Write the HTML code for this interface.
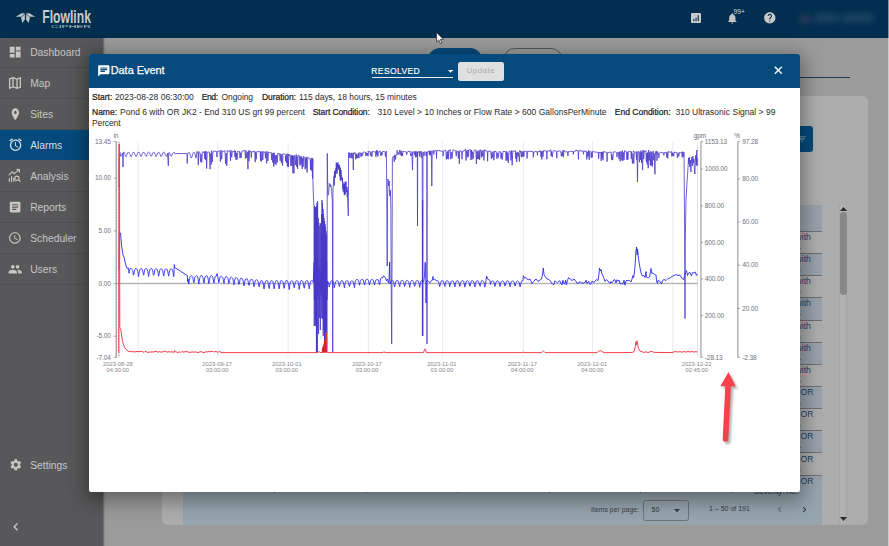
<!DOCTYPE html>
<html><head><meta charset="utf-8"><title>Flowlink Cipher - Data Event</title>
<style>
*{box-sizing:border-box;margin:0;padding:0}
html,body{width:889px;height:546px;overflow:hidden;background:#9b9b9b;font-family:"Liberation Sans",Arial,sans-serif}
.abs{position:absolute}
#hdr{left:0;top:0;width:889px;height:37.6px;background:#022f50}
#side{left:0;top:37.500px;width:103px;height:509px;background:#58585a;box-shadow:1px 0 1.500px rgba(0,0,0,.350)}
.nl{position:absolute;left:30.200px;font-size:10.300px;white-space:nowrap;line-height:12px}
#panel{left:162px;top:96px;width:706px;height:428.500px;background:#adadad;border-radius:6px}
#modal{left:89px;top:54px;width:711px;height:437.5px;background:#fff;border-radius:2px;overflow:hidden;box-shadow:0 5px 19px 4px rgba(0,0,0,.36)}
#mh{left:0;top:0;width:711px;height:34px;background:#054a7c}
.t{position:absolute;white-space:nowrap;font-size:8.500px;color:#262626;left:2.900px;line-height:10.800px}
.t b{font-weight:700;color:#111;letter-spacing:-0.350px}
.ax{font-family:"Liberation Sans",Arial,sans-serif;font-size:6.5px;fill:#70707a;letter-spacing:-0.1px}
.xl{font-family:"Liberation Sans",Arial,sans-serif;font-size:5.8px;fill:#85858c}
.chart{position:absolute;left:0;top:0}
.tx{white-space:nowrap;line-height:1}
</style></head><body>
<div id="panel" class="abs"></div>
<div class="abs" style="left:427.600px;top:48.200px;width:54.600px;height:24px;border-radius:12px;background:#054a7c"></div>
<div class="abs" style="left:503.400px;top:48.400px;width:59.800px;height:24px;border-radius:12px;border:1px solid #55585c"></div>
<div class="abs" style="left:560px;top:77.300px;width:290px;height:1.200px;background:#1c3a56"></div>
<div class="abs" style="left:770px;top:126.400px;width:43px;height:25.400px;border-radius:3px;background:#054a7c"></div>
<svg class="abs" style="left:796.50px;top:134.20px" width="10.00" height="10" viewBox="0 0 24 24" ><path fill="#9fb2c4" d="M10 18h4v-2h-4v2zM3 6v2h18V6H3zm3 7h12v-2H6v2z"/></svg>
<div class="abs" style="left:183.300px;top:204.500px;width:638.700px;height:320px;background:#adadad;overflow:hidden">
<div class="abs" style="left:0;top:0;width:100%;height:27.500px;background:#98a2ac;border-bottom:1px solid #6e7074"></div>
<div class="abs" style="left:0;top:27.50px;width:100%;height:22.150px;background:#adadad;border-bottom:1px solid #6e7074"><span class="abs" style="left:612.3px;top:0px;font-size:8.600px;color:#1c4468">with</span><span class="abs" style="left:611.5px;top:10px;font-size:8px;color:#1c4468">...</span></div>
<div class="abs" style="left:0;top:49.65px;width:100%;height:22.150px;background:#98a2ac;border-bottom:1px solid #6e7074"><span class="abs" style="left:612.3px;top:0px;font-size:8.600px;color:#1c4468">with</span><span class="abs" style="left:611.5px;top:10px;font-size:8px;color:#1c4468">...</span></div>
<div class="abs" style="left:0;top:71.80px;width:100%;height:22.150px;background:#adadad;border-bottom:1px solid #6e7074"><span class="abs" style="left:612.3px;top:0px;font-size:8.600px;color:#1c4468">with</span><span class="abs" style="left:611.5px;top:10px;font-size:8px;color:#1c4468">...</span></div>
<div class="abs" style="left:0;top:93.95px;width:100%;height:22.150px;background:#98a2ac;border-bottom:1px solid #6e7074"><span class="abs" style="left:612.3px;top:0px;font-size:8.600px;color:#1c4468">with</span><span class="abs" style="left:611.5px;top:10px;font-size:8px;color:#1c4468">...</span></div>
<div class="abs" style="left:0;top:116.10px;width:100%;height:22.150px;background:#adadad;border-bottom:1px solid #6e7074"><span class="abs" style="left:612.3px;top:0px;font-size:8.600px;color:#1c4468">with</span><span class="abs" style="left:611.5px;top:10px;font-size:8px;color:#1c4468">...</span></div>
<div class="abs" style="left:0;top:138.25px;width:100%;height:22.150px;background:#98a2ac;border-bottom:1px solid #6e7074"><span class="abs" style="left:612.3px;top:0px;font-size:8.600px;color:#1c4468">with</span><span class="abs" style="left:611.5px;top:10px;font-size:8px;color:#1c4468">...</span></div>
<div class="abs" style="left:0;top:160.40px;width:100%;height:22.150px;background:#adadad;border-bottom:1px solid #6e7074"><span class="abs" style="left:612.3px;top:0px;font-size:8.600px;color:#1c4468">with</span><span class="abs" style="left:611.5px;top:10px;font-size:8px;color:#1c4468">...</span></div>
<div class="abs" style="left:0;top:182.55px;width:100%;height:22.150px;background:#98a2ac;border-bottom:1px solid #6e7074"><span class="abs" style="left:617.2px;top:0px;font-size:8.600px;color:#1c4468">OR</span><span class="abs" style="left:611.5px;top:10px;font-size:8px;color:#1c4468">...</span></div>
<div class="abs" style="left:0;top:204.70px;width:100%;height:22.150px;background:#adadad;border-bottom:1px solid #6e7074"><span class="abs" style="left:617.2px;top:0px;font-size:8.600px;color:#1c4468">OR</span><span class="abs" style="left:611.5px;top:10px;font-size:8px;color:#1c4468">...</span></div>
<div class="abs" style="left:0;top:226.85px;width:100%;height:22.150px;background:#98a2ac;border-bottom:1px solid #6e7074"><span class="abs" style="left:617.2px;top:0px;font-size:8.600px;color:#1c4468">OR</span><span class="abs" style="left:611.5px;top:10px;font-size:8px;color:#1c4468">...</span></div>
<div class="abs" style="left:0;top:249.00px;width:100%;height:22.150px;background:#adadad;border-bottom:1px solid #6e7074"><span class="abs" style="left:617.2px;top:0px;font-size:8.600px;color:#1c4468">OR</span><span class="abs" style="left:611.5px;top:10px;font-size:8px;color:#1c4468">...</span></div>
<div class="abs" style="left:0;top:271.15px;width:100%;height:22.150px;background:#98a2ac;border-bottom:1px solid #6e7074"><span class="abs" style="left:617.2px;top:0px;font-size:8.600px;color:#1c4468">OR</span><span class="abs" style="left:611.5px;top:10px;font-size:8px;color:#1c4468">...</span></div>
<div class="abs" style="left:0;top:280px;width:100%;height:40px;background:#96a4ae"></div>
</div>
<div class="abs" style="left:274.4px;top:490.5px;width:1px;height:2.4px;background:#555a60"></div><div class="abs" style="left:365.7px;top:490.5px;width:1px;height:2.4px;background:#555a60"></div><div class="abs" style="left:457.1px;top:490.5px;width:1px;height:2.4px;background:#555a60"></div><div class="abs" style="left:548.5px;top:490.5px;width:1px;height:2.4px;background:#555a60"></div><div class="abs" style="left:639.9px;top:490.5px;width:1px;height:2.4px;background:#555a60"></div><div class="abs" style="left:731.3px;top:490.5px;width:1px;height:2.4px;background:#555a60"></div>
<span class="abs tx" style="left:754.20px;top:487.17px;font-size:8.3px;font-weight:400;color:#1c4468;letter-spacing:-0.244px;">Severity: no..</span>
<div class="abs" style="left:591px;top:505.600px;font-size:6.800px;color:#3c4046;white-space:nowrap;letter-spacing:0.050px">Items per page:</div>
<div class="abs" style="left:643.300px;top:499.600px;width:45.700px;height:21.400px;border:1px solid #6a747c;border-radius:2.500px"></div>
<div class="abs" style="left:651.500px;top:505.600px;font-size:7px;color:#2c3036">50</div>
<svg class="abs" style="left:674.400px;top:508.600px" width="6" height="3.500" viewBox="0 0 6 3.500"><path d="M0 0 H6 L3 3.300 Z" fill="#3a3e44"/></svg>
<div class="abs" style="left:709px;top:505.400px;font-size:7px;color:#3c4046;white-space:nowrap">1 – 50 of 191</div>
<svg class="abs" style="left:773.50px;top:504.30px" width="11.00" height="11" viewBox="0 0 24 24" ><path fill="#616c76" d="M15.41 7.41L14 6l-6 6 6 6 1.41-1.41L10.83 12z"/></svg>
<svg class="abs" style="left:799.10px;top:504.30px" width="11.00" height="11" viewBox="0 0 24 24" ><path fill="#2c3238" d="M10 6L8.59 7.41 13.17 12l-4.58 4.59L10 18l6-6z"/></svg>
<div class="abs" style="left:839.400px;top:204.500px;width:7.400px;height:318px;background:#b2b2b2;border-left:1px solid #a4a4a4;border-right:1px solid #a4a4a4"></div>
<div class="abs" style="left:839.600px;top:212px;width:7px;height:82.600px;background:#888888;border-radius:3px"></div>
<svg class="abs" style="left:839.600px;top:206.600px" width="7" height="4" viewBox="0 0 7 4"><path d="M0 4 H7 L3.500 0 Z" fill="#2a2a2a"/></svg>
<svg class="abs" style="left:839.600px;top:517px" width="7" height="4" viewBox="0 0 7 4"><path d="M0 0 H7 L3.500 4 Z" fill="#2a2a2a"/></svg>
<div id="hdr" class="abs"></div>
<div id="side" class="abs"></div>
<div class="abs" style="left:0;top:0;width:103px;height:546px">
<div class="abs" style="left:0;top:66.7px;width:103px;height:1px;background:#505052"></div>
<svg class="abs" style="left:8.00px;top:44.80px" width="14.40" height="14.4" viewBox="0 0 24 24" ><path fill="#c6c6c6" d="M3 13h8V3H3v10zm0 8h8v-6H3v6zm10 0h8V11h-8v10zm0-18v6h8V3h-8z"/></svg>
<div class="nl" style="top:47.20px;color:#c6c6c6">Dashboard</div>
<div class="abs" style="left:0;top:97.7px;width:103px;height:1px;background:#505052"></div>
<svg class="abs" style="left:7.20px;top:75.00px" width="16.00" height="16" viewBox="0 0 24 24" ><path fill="#c6c6c6" d="M20.5 3l-.16.03L15 5.1 9 3 3.36 4.9c-.21.07-.36.25-.36.48V20.5c0 .28.22.5.5.5l.16-.03L9 18.9l6 2.1 5.64-1.9c.21-.07.36-.25.36-.48V3.5c0-.28-.22-.5-.5-.5zM10 5.47l4 1.4v11.66l-4-1.4V5.47zm-5 .99l3-1.01v11.7l-3 1.16V6.46zm14 11.08l-3 1.01V6.86l3-1.16v11.84z"/></svg>
<div class="nl" style="top:78.20px;color:#c6c6c6">Map</div>
<div class="abs" style="left:0;top:128.7px;width:103px;height:1px;background:#505052"></div>
<svg class="abs" style="left:8.86px;top:106.80px" width="12.67" height="14.4" viewBox="0 0 24 24" preserveAspectRatio="none" ><path fill="#c6c6c6" d="M12 2C8.13 2 5 5.13 5 9c0 5.25 7 13 7 13s7-7.75 7-13c0-3.87-3.13-7-7-7zm0 9.5c-1.38 0-2.5-1.12-2.5-2.5s1.12-2.5 2.5-2.5 2.5 1.12 2.5 2.5-1.12 2.5-2.5 2.5z"/></svg>
<div class="nl" style="top:109.20px;color:#c6c6c6">Sites</div>
<div class="abs" style="left:0;top:129.5px;width:103px;height:30.4px;background:#054a7c"></div>
<svg class="abs" style="left:7.60px;top:137.40px" width="15.20" height="15.2" viewBox="0 0 24 24" ><path fill="#d4dde6" d="M22 5.72l-4.6-3.86-1.29 1.53 4.6 3.86L22 5.72zM7.88 3.39L6.6 1.86 2 5.71l1.29 1.53 4.59-3.85zM12.5 8H11v6l4.75 2.85.75-1.23-4-2.37V8zM12 4c-4.97 0-9 4.03-9 9s4.02 9 9 9c4.97 0 9-4.03 9-9s-4.03-9-9-9zm0 16c-3.87 0-7-3.13-7-7s3.13-7 7-7 7 3.13 7 7-3.13 7-7 7z"/></svg>
<div class="nl" style="top:140.20px;color:#d4dde6">Alarms</div>
<div class="abs" style="left:0;top:190.7px;width:103px;height:1px;background:#505052"></div>
<svg class="abs" style="left:8.2px;top:169.40px" width="13.4" height="13.4" viewBox="0 0 24 24" fill="none" stroke="#c6c6c6" stroke-width="2"><path d="M1.5 11.5 L7.5 5 L11 8.5 L20 1.2"/><path d="M15 1 H20.5 V6.5"/><path d="M2.500 23 V16.500 M6.500 23 V13 M10.500 23 V15.500" stroke-width="2.200"/><circle cx="16" cy="16.500" r="3.800"/><path d="M19 19.500 L22.500 23"/></svg>
<div class="nl" style="top:171.20px;color:#c6c6c6">Analysis</div>
<div class="abs" style="left:0;top:221.7px;width:103px;height:1px;background:#505052"></div>
<svg class="abs" style="left:8.10px;top:199.90px" width="14.20" height="14.2" viewBox="0 0 24 24" ><path fill="#c6c6c6" d="M19 3H5c-1.1 0-2 .9-2 2v14c0 1.1.9 2 2 2h14c1.1 0 2-.9 2-2V5c0-1.1-.9-2-2-2zm-5 14H7v-2h7v2zm3-4H7v-2h10v2zm0-4H7V7h10v2z"/></svg>
<div class="nl" style="top:202.20px;color:#c6c6c6">Reports</div>
<div class="abs" style="left:0;top:252.7px;width:103px;height:1px;background:#505052"></div>
<svg class="abs" style="left:8.30px;top:231.10px" width="13.80" height="13.8" viewBox="0 0 24 24" ><path fill="#c6c6c6" d="M11.99 2C6.47 2 2 6.48 2 12s4.47 10 9.99 10C17.52 22 22 17.52 22 12S17.52 2 11.99 2zM12 20c-4.42 0-8-3.58-8-8s3.58-8 8-8 8 3.58 8 8-3.58 8-8 8zm.5-13H11v6l5.25 3.15.75-1.23-4.5-2.67z"/></svg>
<div class="nl" style="top:233.20px;color:#c6c6c6">Scheduler</div>
<div class="abs" style="left:0;top:283.7px;width:103px;height:1px;background:#505052"></div>
<svg class="abs" style="left:8.00px;top:261.80px" width="14.40" height="14.4" viewBox="0 0 24 24" ><path fill="#c6c6c6" d="M16 11c1.66 0 2.99-1.34 2.99-3S17.66 5 16 5c-1.66 0-3 1.34-3 3s1.34 3 3 3zm-8 0c1.66 0 2.99-1.34 2.99-3S9.66 5 8 5C6.34 5 5 6.34 5 8s1.34 3 3 3zm0 2c-2.33 0-7 1.17-7 3.5V19h14v-2.5c0-2.33-4.67-3.5-7-3.5zm8 0c-.29 0-.62.02-.97.05 1.16.84 1.97 1.97 1.97 3.45V19h6v-2.5c0-2.33-4.67-3.5-7-3.5z"/></svg>
<div class="nl" style="top:264.20px;color:#c6c6c6">Users</div>
<svg class="abs" style="left:8.50px;top:458.20px" width="13.60" height="13.6" viewBox="0 0 24 24" ><path fill="#c6c6c6" d="M19.14 12.94c.04-.3.06-.61.06-.94 0-.32-.02-.64-.07-.94l2.03-1.58c.18-.14.23-.41.12-.61l-1.92-3.32c-.12-.22-.37-.29-.59-.22l-2.39.96c-.5-.38-1.03-.7-1.62-.94l-.36-2.54c-.04-.24-.24-.41-.48-.41h-3.84c-.24 0-.43.17-.47.41l-.36 2.54c-.59.24-1.13.57-1.62.94l-2.39-.96c-.22-.08-.47 0-.59.22L2.74 8.87c-.12.21-.08.47.12.61l2.03 1.58c-.05.3-.09.63-.09.94s.02.64.07.94l-2.03 1.58c-.18.14-.23.41-.12.61l1.92 3.32c.12.22.37.29.59.22l2.39-.96c.5.38 1.03.7 1.62.94l.36 2.54c.05.24.24.41.48.41h3.84c.24 0 .44-.17.47-.41l.36-2.54c.59-.24 1.13-.56 1.62-.94l2.39.96c.22.08.47 0 .59-.22l1.92-3.32c.12-.22.07-.47-.12-.61l-2.01-1.58zM12 15.6c-1.98 0-3.6-1.62-3.6-3.6s1.62-3.6 3.6-3.6 3.6 1.62 3.6 3.6-1.62 3.6-3.6 3.6z"/></svg>
<div class="nl" style="top:459.8px;color:#c6c6c6">Settings</div>
<svg class="abs" style="left:7.80px;top:518.60px" width="15.60" height="15.6" viewBox="0 0 24 24" ><path fill="#d0d0d0" d="M15.41 7.41L14 6l-6 6 6 6 1.41-1.41L10.83 12z"/></svg>
</div>
<svg class="abs" style="left:15px;top:11.500px" width="21" height="12" viewBox="0 0 21 12"><g fill="#c2c4c6"><path d="M0.800 4.700 L6.600 1.300 L10 1.300 L6.300 4.700 Z"/><path d="M20.200 4.700 L14.400 1.300 L11 1.300 L14.700 4.700 Z"/><path d="M6.100 5.500 L9.900 2 L9.900 7.500 L7.300 11 Z"/><path d="M14.900 5.500 L11.100 2 L11.100 7.500 L13.700 11 Z"/></g></svg>
<svg class="abs" style="left:40px;top:5px" width="60" height="28" viewBox="0 0 60 28"><text x="2.300" y="17.500" font-family="Liberation Sans, Arial, sans-serif" font-weight="700" font-size="17.500" fill="#c9cacb" textLength="48.600" lengthAdjust="spacingAndGlyphs">Flowlink</text><text x="11" y="23.100" font-family="Liberation Sans, Arial, sans-serif" font-size="3.900" fill="#c2c4c6" textLength="40" lengthAdjust="spacingAndGlyphs">CIPHER</text></svg>
<svg class="abs" style="left:691px;top:12.800px" width="10" height="10" viewBox="0 0 10 10"><rect width="10" height="10" rx="1" fill="#c8c9ca"/><rect x="2.200" y="6" width="1.300" height="2.200" fill="#2a4a66"/><rect x="4.400" y="4.600" width="1.300" height="3.600" fill="#2a4a66"/><rect x="6.600" y="2.200" width="1.400" height="6" fill="#2a4a66"/></svg>
<svg class="abs" style="left:726.40px;top:12.20px" width="12.60" height="12.6" viewBox="0 0 24 24" ><path fill="#c4c5c6" d="M12 22c1.1 0 2-.9 2-2h-4c0 1.1.89 2 2 2zm6-6v-5c0-3.07-1.64-5.64-4.5-6.32V4c0-.83-.67-1.5-1.5-1.5s-1.500.67-1.5 1.5v.68C7.63 5.36 6 7.92 6 11v5l-2 2v1h16v-1l-2-2z"/></svg>
<div class="abs" style="left:733.600px;top:7.900px;font-size:6.600px;color:#d4d5d6">99+</div>
<svg class="abs" style="left:762.80px;top:10.90px" width="13.60" height="13.6" viewBox="0 0 24 24" ><path fill="#c8c9ca" d="M12 2C6.48 2 2 6.48 2 12s4.48 10 10 10 10-4.48 10-10S17.52 2 12 2zm1 17h-2v-2h2v2zm2.070-7.75l-.9.92C13.45 12.9 13 13.5 13 15h-2v-.5c0-1.1.45-2.1 1.170-2.830l1.24-1.260c.37-.36.59-.86.59-1.410 0-1.1-.9-2-2-2s-2 .9-2 2H8c0-2.210 1.790-4 4-4s4 1.790 4 4c0 .88-.36 1.680-.93 2.250z"/></svg>
<div class="abs" style="left:800px;top:13.500px;width:10px;height:10px;border-radius:5px;background:#6a4a62;filter:blur(3px);opacity:.45"></div>
<div class="abs" style="left:814px;top:14px;width:24px;height:8px;border-radius:3px;background:#3a5a74;filter:blur(3px);opacity:.5"></div>
<div class="abs" style="left:840px;top:14px;width:34px;height:8px;border-radius:3px;background:#3a5a74;filter:blur(3px);opacity:.5"></div>
<svg class="abs" style="left:435.7px;top:31.700px" width="9" height="13" viewBox="0 0 9 13"><path d="M0.500 0.500 L0.500 10 L2.800 7.900 L4.400 11.600 L5.900 11 L4.300 7.400 L7.400 7.300 Z" fill="#fff" stroke="#222" stroke-width="0.700"/></svg>
<div id="modal" class="abs">
<div id="mh" class="abs"></div>
<svg class="abs" style="left:7.80px;top:9.90px" width="13.60" height="13.6" viewBox="0 0 24 24" ><path fill="#ffffff" d="M20 2H4c-1.1 0-1.990.9-1.990 2L2 22l4-4h14c1.1 0 2-.9 2-2V4c0-1.1-.9-2-2-2zM6 9h12v2H6V9zm8 5H6v-2h8v2zm4-6H6V6h12v2z"/></svg>
<div class="abs" style="left:21.700px;top:10.000px;font-size:10.900px;color:#fff;white-space:nowrap;-webkit-text-stroke:0.250px #fff" id="ttl">Data Event</div>
<div class="abs" style="left:282.300px;top:12.300px;font-size:8.500px;color:#fff;white-space:nowrap;letter-spacing:0.400px;-webkit-text-stroke:0.150px #fff" id="res">RESOLVED</div>
<div class="abs" style="left:282.500px;top:23px;width:81.200px;height:0.900px;background:#e8eef4"></div>
<svg class="abs" style="left:358.600px;top:16.200px" width="5.200" height="2.800" viewBox="0 0 5.200 2.800"><path d="M0 0 H5.200 L2.600 2.700 Z" fill="#fff"/></svg>
<div class="abs" style="left:369.100px;top:7.900px;width:45.600px;height:19.100px;border-radius:2.500px;background:#e0e0e0"></div>
<div class="abs" style="left:377.600px;top:11.900px;font-size:8px;color:#a9a9a9;white-space:nowrap;letter-spacing:0.450px" id="upd">Update</div>
<svg class="abs" style="left:682.70px;top:10.10px" width="12.60" height="12.6" viewBox="0 0 24 24" stroke="#fff" stroke-width="0.9"><path fill="#ffffff" d="M19 6.410L17.590 5 12 10.590 6.410 5 5 6.410 10.590 12 5 17.590 6.410 19 12 13.410 17.590 19 19 17.590 13.410 12z"/></svg>
<div class="abs" style="left:-89px;top:-54px;width:889px;height:546px"><span class="abs tx" style="left:92.00px;top:92.70px;font-size:8.5px;font-weight:400;color:#1a1a1a;letter-spacing:-0.002px;-webkit-text-stroke:0.22px #1a1a1a">Start:</span>
<span class="abs tx" style="left:114.90px;top:92.70px;font-size:8.5px;font-weight:400;color:#2a2a2a;letter-spacing:-0.007px;">2023-08-28 06:30:00</span>
<span class="abs tx" style="left:201.80px;top:92.70px;font-size:8.5px;font-weight:400;color:#1a1a1a;letter-spacing:-0.425px;-webkit-text-stroke:0.22px #1a1a1a">End:</span>
<span class="abs tx" style="left:221.60px;top:92.70px;font-size:8.5px;font-weight:400;color:#2a2a2a;letter-spacing:-0.106px;">Ongoing</span>
<span class="abs tx" style="left:262.00px;top:92.70px;font-size:8.5px;font-weight:400;color:#1a1a1a;letter-spacing:-0.067px;-webkit-text-stroke:0.22px #1a1a1a">Duration:</span>
<span class="abs tx" style="left:299.10px;top:92.70px;font-size:8.5px;font-weight:400;color:#2a2a2a;letter-spacing:-0.013px;">115 days, 18 hours, 15 minutes</span>
<span class="abs tx" style="left:92.00px;top:108.30px;font-size:8.5px;font-weight:400;color:#1a1a1a;letter-spacing:-0.009px;-webkit-text-stroke:0.22px #1a1a1a">Name:</span>
<span class="abs tx" style="left:120.00px;top:108.30px;font-size:8.5px;font-weight:400;color:#2a2a2a;letter-spacing:0.005px;">Pond 6 with OR JK2 - End 310 US grt 99 percent</span>
<span class="abs tx" style="left:312.70px;top:108.30px;font-size:8.5px;font-weight:400;color:#1a1a1a;letter-spacing:-0.100px;-webkit-text-stroke:0.22px #1a1a1a">Start Condition:</span>
<span class="abs tx" style="left:377.60px;top:108.30px;font-size:8.5px;font-weight:400;color:#2a2a2a;letter-spacing:0.022px;">310 Level &gt; 10 Inches or Flow Rate &gt; 600 GallonsPerMinute</span>
<span class="abs tx" style="left:614.80px;top:108.30px;font-size:8.5px;font-weight:400;color:#1a1a1a;letter-spacing:0.002px;-webkit-text-stroke:0.22px #1a1a1a">End Condition:</span>
<span class="abs tx" style="left:675.40px;top:108.30px;font-size:8.5px;font-weight:400;color:#2a2a2a;letter-spacing:0.024px;">310 Ultrasonic Signal &gt; 99</span>
<span class="abs tx" style="left:92.00px;top:119.20px;font-size:8.5px;font-weight:400;color:#2a2a2a;letter-spacing:-0.128px;">Percent</span></div>
</div>
<svg class="chart" width="889" height="546" viewBox="0 0 889 546">
<line x1="138.2" y1="141.6" x2="138.2" y2="357" stroke="#e8e9f5" stroke-width="0.9"/>
<line x1="217.9" y1="141.6" x2="217.9" y2="357" stroke="#e8e9f5" stroke-width="0.9"/>
<line x1="288.0" y1="141.6" x2="288.0" y2="357" stroke="#e8e9f5" stroke-width="0.9"/>
<line x1="368.4" y1="141.6" x2="368.4" y2="357" stroke="#e8e9f5" stroke-width="0.9"/>
<line x1="442.5" y1="141.6" x2="442.5" y2="357" stroke="#e8e9f5" stroke-width="0.9"/>
<line x1="523.4" y1="141.6" x2="523.4" y2="357" stroke="#e8e9f5" stroke-width="0.9"/>
<line x1="592.5" y1="141.6" x2="592.5" y2="357" stroke="#e8e9f5" stroke-width="0.9"/>
<line x1="672.8" y1="141.6" x2="672.8" y2="357" stroke="#e8e9f5" stroke-width="0.9"/>
<line x1="697.6" y1="141.6" x2="697.6" y2="357" stroke="#dcdcdc" stroke-width="0.9"/>
<line x1="117" y1="283.6" x2="698" y2="283.6" stroke="#b6b6b6" stroke-width="1.5"/>
<line x1="116.3" y1="141.6" x2="116.3" y2="357.6" stroke="#a8a8ac" stroke-width="1.5"/>
<line x1="113.8" y1="141.6" x2="116.3" y2="141.6" stroke="#8a8a8a" stroke-width="0.8"/>
<text x="110.8" y="143.85" text-anchor="end" class="ax">13.45</text>
<line x1="113.8" y1="178.1" x2="116.3" y2="178.1" stroke="#8a8a8a" stroke-width="0.8"/>
<text x="110.8" y="180.35" text-anchor="end" class="ax">10.00</text>
<line x1="113.8" y1="230.9" x2="116.3" y2="230.9" stroke="#8a8a8a" stroke-width="0.8"/>
<text x="110.8" y="233.15" text-anchor="end" class="ax">5.00</text>
<line x1="113.8" y1="283.6" x2="116.3" y2="283.6" stroke="#8a8a8a" stroke-width="0.8"/>
<text x="110.8" y="285.85" text-anchor="end" class="ax">0.00</text>
<line x1="113.8" y1="336.2" x2="116.3" y2="336.2" stroke="#8a8a8a" stroke-width="0.8"/>
<text x="110.8" y="338.45" text-anchor="end" class="ax">-5.00</text>
<line x1="113.8" y1="357.3" x2="116.3" y2="357.3" stroke="#8a8a8a" stroke-width="0.8"/>
<text x="110.8" y="359.55" text-anchor="end" class="ax">-7.04</text>
<text x="115.9" y="137.8" text-anchor="middle" class="ax">in</text>
<line x1="700.9" y1="141.6" x2="700.9" y2="357.6" stroke="#a8a8ac" stroke-width="1.3"/>
<line x1="700.9" y1="141.6" x2="703" y2="141.6" stroke="#8a8a8a" stroke-width="0.8"/>
<text x="704.8" y="143.85" class="ax">1153.13</text>
<line x1="700.9" y1="169.1" x2="703" y2="169.1" stroke="#8a8a8a" stroke-width="0.8"/>
<text x="704.8" y="171.35" class="ax">1000.00</text>
<line x1="700.9" y1="205.8" x2="703" y2="205.8" stroke="#8a8a8a" stroke-width="0.8"/>
<text x="704.8" y="208.05" class="ax">800.00</text>
<line x1="700.9" y1="242.3" x2="703" y2="242.3" stroke="#8a8a8a" stroke-width="0.8"/>
<text x="704.8" y="244.55" class="ax">600.00</text>
<line x1="700.9" y1="278.9" x2="703" y2="278.9" stroke="#8a8a8a" stroke-width="0.8"/>
<text x="704.8" y="281.15" class="ax">400.00</text>
<line x1="700.9" y1="315.5" x2="703" y2="315.5" stroke="#8a8a8a" stroke-width="0.8"/>
<text x="704.8" y="317.75" class="ax">200.00</text>
<line x1="700.9" y1="357.3" x2="703" y2="357.3" stroke="#8a8a8a" stroke-width="0.8"/>
<text x="704.8" y="359.55" class="ax">-28.13</text>
<text x="700" y="137.6" text-anchor="middle" class="ax">gpm</text>
<line x1="737.8" y1="141.6" x2="737.8" y2="357.6" stroke="#a8a8ac" stroke-width="1.3"/>
<line x1="737.8" y1="141.6" x2="740" y2="141.6" stroke="#8a8a8a" stroke-width="0.8"/>
<text x="742.2" y="143.85" class="ax">97.28</text>
<line x1="737.8" y1="179" x2="740" y2="179" stroke="#8a8a8a" stroke-width="0.8"/>
<text x="742.2" y="181.25" class="ax">80.00</text>
<line x1="737.8" y1="222" x2="740" y2="222" stroke="#8a8a8a" stroke-width="0.8"/>
<text x="742.2" y="224.25" class="ax">60.00</text>
<line x1="737.8" y1="265.2" x2="740" y2="265.2" stroke="#8a8a8a" stroke-width="0.8"/>
<text x="742.2" y="267.45" class="ax">40.00</text>
<line x1="737.8" y1="308.4" x2="740" y2="308.4" stroke="#8a8a8a" stroke-width="0.8"/>
<text x="742.2" y="310.65" class="ax">20.00</text>
<line x1="737.8" y1="357.3" x2="740" y2="357.3" stroke="#8a8a8a" stroke-width="0.8"/>
<text x="742.2" y="359.55" class="ax">-2.38</text>
<text x="737.2" y="137.6" text-anchor="middle" class="ax">%</text>
<text x="117.8" y="366.2" text-anchor="middle" class="xl">2023-08-28</text>
<text x="117.8" y="371.7" text-anchor="middle" class="xl">04:30:00</text>
<text x="217.2" y="366.2" text-anchor="middle" class="xl">2023-09-17</text>
<text x="217.2" y="371.7" text-anchor="middle" class="xl">03:00:00</text>
<text x="286.8" y="366.2" text-anchor="middle" class="xl">2023-10-01</text>
<text x="286.8" y="371.7" text-anchor="middle" class="xl">03:00:00</text>
<text x="367" y="366.2" text-anchor="middle" class="xl">2023-10-17</text>
<text x="367" y="371.7" text-anchor="middle" class="xl">03:00:00</text>
<text x="441.9" y="366.2" text-anchor="middle" class="xl">2023-11-01</text>
<text x="441.9" y="371.7" text-anchor="middle" class="xl">03:00:00</text>
<text x="522.3" y="366.2" text-anchor="middle" class="xl">2023-11-17</text>
<text x="522.3" y="371.7" text-anchor="middle" class="xl">04:00:00</text>
<text x="592.2" y="366.2" text-anchor="middle" class="xl">2023-12-01</text>
<text x="592.2" y="371.7" text-anchor="middle" class="xl">04:00:00</text>
<text x="696.7" y="366.2" text-anchor="middle" class="xl">2023-12-22</text>
<text x="696.7" y="371.7" text-anchor="middle" class="xl">02:45:00</text>
<path d="M119 270 L119.3 232 L120.5 233 L121.5 245 L123 255 L124 257 L125.5 264 L127 268.5 L128.5 268 L129 273.21 L129.4 271.23 L129.8 269.78 L130.2 269.03 L130.6 268.45 L131.0 268.48 L131.4 268.48 L131.8 268.95 L132.2 269.62 L132.6 270.48 L133.0 272.46 L133.4 275.17 L133.8 274.59 L134.2 272.18 L134.6 270.41 L135.0 269.14 L135.4 268.48 L135.8 268.54 L136.2 268.52 L136.6 268.69 L137.0 269.26 L137.4 270.03 L137.8 271.51 L138.2 273.87 L138.6 276.54 L139.0 273.33 L139.4 271.53 L139.8 269.98 L140.2 269.2 L140.6 268.84 L141.0 268.58 L141.4 268.6 L141.8 268.64 L142.2 269.48 L142.6 270.39 L143.0 272.29 L143.4 274.98 L143.8 274.96 L144.2 272.44 L144.6 270.4 L145.0 269.2 L145.4 268.7 L145.8 268.5 L146.2 268.62 L146.6 268.52 L147.0 269.28 L147.4 269.98 L147.8 271.25 L148.2 273.53 L148.6 276.48 L149.0 273.86 L149.4 271.44 L149.8 270.24 L150.2 269.43 L150.6 268.8 L151.0 268.74 L151.4 268.55 L151.8 268.71 L152.2 269.37 L152.6 270.45 L153.0 272.56 L153.4 274.77 L153.8 275.3 L154.2 273.09 L154.6 270.91 L155.0 269.47 L155.4 269.04 L155.8 268.58 L156.2 268.82 L156.6 269.09 L157.0 269.33 L157.4 270.02 L157.8 271.23 L158.2 273.45 L158.6 276.19 L159.0 274.44 L159.4 271.96 L159.8 270.44 L160.2 269.27 L160.6 268.81 L161.0 269.01 L161.4 269.11 L161.8 269.17 L162.2 269.63 L162.6 270.69 L163.0 272.41 L163.4 274.63 L163.8 275.96 L164.2 273.14 L164.6 270.93 L165.0 269.62 L165.4 269.06 L165.8 268.82 L166.2 269.01 L166.6 269.18 L167.0 269.19 L167.4 270.15 L167.8 271.53 L168.2 273.6 L168.6 276.09 L169.0 274.55 L169.4 272.12 L169.8 270.39 L170.2 269.39 L170.6 269.14 L171.0 269.17 L171.4 269.14 L171.8 269.07 L172.2 269.6 L172.6 270.66 L173.0 271.99 L173.4 274.68 L173.8 276.57 L174.3 264.5 L174.8 267.5 L187.3 275.6 L187.6 282 L188 278.93 L188.4 281.36 L188.8 284.02 L189.2 280.79 L189.6 278.73 L190.0 276.91 L190.4 276.26 L190.8 276.0 L191.2 275.65 L191.6 275.67 L192.0 276.13 L192.4 276.63 L192.8 277.61 L193.2 279.61 L193.6 282.39 L194.0 282.77 L194.4 279.95 L194.8 277.6 L195.2 276.68 L195.6 276.14 L196.0 275.79 L196.4 275.63 L196.8 275.79 L197.2 275.93 L197.6 276.75 L198.0 278.82 L198.4 281.03 L198.8 284.04 L199.2 281.45 L199.6 278.75 L200.0 277.31 L200.4 276.34 L200.8 275.64 L201.2 275.58 L201.6 275.61 L202.0 275.74 L202.4 276.47 L202.8 277.5 L203.2 279.51 L203.6 282.07 L204.0 283.09 L204.4 279.96 L204.8 277.92 L205.2 276.65 L205.6 276.14 L206.0 275.68 L206.4 275.91 L206.8 275.75 L207.2 276.07 L207.6 276.89 L208.0 278.15 L208.4 280.65 L208.8 283.54 L209.2 281.27 L209.6 279.15 L210.0 277.09 L210.4 276.23 L210.8 275.91 L211.2 275.73 L211.6 275.62 L212.0 275.85 L212.4 276.38 L212.8 277.61 L213.2 279.13 L213.6 281.99 L214.0 283.08 L214.4 280.18 L214.8 278.25 L215.2 276.72 L215.6 276.02 L216.0 275.86 L216.4 275.91 L217 273.6 L217.6 276 L218 277.98 L218.4 280.06 L218.8 282.65 L219.2 281.32 L219.6 279.17 L220.0 277.48 L220.4 276.61 L220.8 276.2 L221.2 276.37 L221.6 276.29 L222.0 276.52 L222.4 277.0 L222.8 277.62 L223.2 279.39 L223.6 281.88 L224.0 283.52 L224.4 280.58 L224.8 278.63 L225.2 277.53 L225.6 276.69 L226.0 276.56 L226.4 276.49 L226.8 276.85 L227.2 277.16 L227.6 277.88 L228.0 278.75 L228.4 280.96 L228.8 283.52 L229.2 282.47 L229.6 280.53 L230.0 278.94 L230.4 277.6 L230.8 277.53 L231.2 277.17 L231.6 277.25 L232.0 277.63 L232.4 277.96 L232.8 278.53 L233.2 280.21 L233.6 282.48 L234.0 284.64 L234.4 281.92 L234.8 279.97 L235.2 278.84 L235.6 277.79 L236.0 277.8 L236.4 277.74 L236.8 277.59 L237.2 277.97 L237.6 278.73 L238.0 279.85 L238.4 281.49 L238.8 284.47 L239.2 284.14 L239.6 281.86 L240.0 279.72 L240.4 278.77 L240.8 278.18 L241.2 278.44 L241.6 278.21 L242.0 278.25 L242.4 278.77 L242.8 279.86 L243.2 281.29 L243.6 283.18 L244.0 285.91 L244.4 283.59 L244.8 281.34 L245.2 280.01 L245.6 278.94 L246.0 278.64 L246.4 278.94 L246.8 278.86 L247.2 278.88 L247.6 279.87 L248.0 280.84 L248.4 282.71 L248.8 284.81 L249.2 285.52 L249.6 282.69 L250.0 281.31 L250.4 280.01 L250.8 279.43 L251.2 279.4 L251.6 279.61 L252.0 279.38 L252.4 279.64 L252.8 280.63 L253.2 281.9 L253.6 283.93 L254.0 286.69 L254.4 284.48 L254.8 282.41 L255.2 281.0 L255.6 280.18 L256.0 280.08 L256.4 279.81 L256.8 279.96 L257.2 279.98 L257.6 280.58 L258.0 281.47 L258.4 283.3 L258.8 285.58 L259.2 286.81 L259.6 284.22 L260 282.91 L260.4 281.61 L260.8 281.1 L261.2 280.43 L261.6 280.76 L262.0 280.61 L262.4 280.95 L262.8 281.95 L263.2 283.3 L263.6 285.74 L264.0 288.98 L264.4 287.15 L264.8 284.13 L265.2 282.48 L265.6 281.31 L266.0 280.79 L266.4 280.56 L266.8 280.53 L267.2 280.51 L267.6 281.06 L268.0 282.18 L268.4 284.44 L268.8 286.94 L269.2 288.55 L269.6 285.39 L270.0 283.42 L270.4 281.91 L270.8 281.01 L271.2 280.53 L271.6 280.47 L272.0 280.53 L272.4 280.88 L272.8 281.5 L273.2 283.13 L273.6 285.34 L274.0 288.78 L274.4 287.46 L274.8 284.46 L275.2 282.34 L275.6 281.52 L276.0 280.65 L276.4 280.53 L276.8 280.35 L277.2 280.65 L277.6 281.16 L278.0 282.25 L278.4 283.94 L278.8 286.76 L279.2 288.82 L279.6 285.76 L280.0 283.25 L280.4 281.8 L280.8 280.75 L281.2 280.41 L281.6 280.5 L282.0 280.49 L282.4 280.9 L282.8 281.58 L283.2 283.1 L283.6 285.27 L284.0 288.31 L284.4 287.73 L284.8 284.63 L285.2 282.54 L285.6 281.62 L286.0 280.6 L286.4 280.72 L286.8 280.67 L287.2 280.46 L287.6 281.27 L288.0 282.3 L288.4 283.93 L288.8 286.57 L289.2 289.58 L289.6 285.98 L290.0 283.67 L290.4 281.97 L290.8 281.21 L291.2 280.82 L291.6 280.76 L292.0 280.66 L292.4 281.01 L292.8 281.56 L293.2 282.89 L293.6 284.8 L294.0 287.64 L294.4 287.69 L294.8 284.86 L295.2 282.6 L295.6 281.64 L296.0 280.84 L296.4 280.68 L296.8 280.66 L297.2 280.76 L297.6 281.03 L298.0 281.72 L298.4 283.8 L298.8 286.29 L299.2 289.42 L299.6 286.47 L300.0 283.95 L300.4 281.89 L300.8 281.22 L301.2 280.56 L301.6 280.39 L302.0 280.49 L302.4 280.89 L302.8 281.23 L303.2 282.75 L303.6 284.92 L304.0 287.54 L304.4 288.15 L304.8 285.18 L305.2 283.07 L305.6 281.7 L306.0 280.91 L306.4 280.69 L306.8 280.39 L307.2 280.47 L307.6 280.86 L308.0 281.97 L308.4 283.35 L308.8 285.91 L309.2 288.82 L309.6 286.54 L310.0 283.98 L310.4 282.33 L310.8 281.27 L311.2 280.8 L311.6 280.5 L312.0 280.61 L312.4 280.73 L312.8 281.27 L313.2 282.28 L314.2 262 L314.45 300 L315.2 250 L315.45 320 L316.2 258 L316.45 352 L317.2 270 L317.45 296 L319.0 268 L319.25 300 L321.0 272 L321.25 294 L323.2 255 L323.45 330 L324.6 235 L324.85 352 L325.2 240 L325.45 305 L325.8 238 L326.05 352 L326.6 262 L326.85 300 L327.6 281 L328 281.79 L328.4 282.57 L328.8 284.71 L329.2 287.06 L329.6 285.83 L330.0 283.86 L330.4 282.48 L330.8 281.6 L331.2 280.9 L331.6 280.69 L332.0 280.66 L332.4 281.1 L332.8 281.07 L333.2 282.06 L333.6 283.25 L334.0 285.48 L334.4 287.75 L334.8 284.83 L335.2 283.26 L335.6 281.82 L336.0 281.31 L336.4 280.95 L336.8 280.67 L337.2 281.01 L337.6 280.98 L338.0 281.28 L338.4 282.33 L338.8 284.27 L339.2 286.56 L339.6 286.23 L340.0 283.89 L340.4 282.36 L340.8 281.35 L341.2 281.12 L341.6 280.56 L342.0 280.93 L342.4 281.03 L342.8 280.97 L343.2 282.13 L343.6 283.37 L344.0 285.44 L344.4 287.69 L344.8 285.18 L345.2 283.21 L345.6 282.17 L346.0 281.21 L346.4 280.79 L346.8 280.76 L347.2 280.7 L347.6 280.73 L348.0 281.24 L348.4 282.61 L348.8 283.96 L349.2 286.55 L349.6 286.46 L350.0 284.15 L350.4 282.58 L350.8 281.36 L351.2 280.92 L351.6 281.04 L352.0 280.99 L352.4 281.0 L352.8 281.18 L353.2 282.02 L353.6 283.32 L354.0 285.04 L354.4 287.63 L354.8 285.25 L355 282.68 L355.4 281.06 L355.8 280.27 L356.2 279.74 L356.6 279.41 L357.0 279.27 L357.4 279.75 L357.8 279.57 L358.2 280.32 L358.6 281.32 L359.0 282.92 L359.4 285.26 L359.8 283.84 L360.2 281.71 L360.6 280.67 L361.0 279.78 L361.4 279.6 L361.8 279.45 L362.2 279.34 L362.6 279.43 L363.0 279.81 L363.4 280.95 L363.8 282.06 L364.2 283.78 L364.6 285.0 L365.0 282.99 L365.4 281.18 L365.8 280.04 L366.2 279.55 L366.6 279.32 L367.0 279.42 L367.4 279.32 L367.8 279.59 L368.2 280.13 L368.6 281.3 L369.0 283.02 L369.4 285.04 L369.8 283.77 L370.2 281.94 L370.6 280.71 L371.0 279.87 L371.4 279.51 L371.8 279.28 L372.2 279.39 L372.6 279.81 L373.0 279.72 L373.4 280.65 L373.8 281.97 L374.2 283.89 L374.6 284.88 L375.0 282.81 L375.4 281.21 L375.8 280.24 L376.2 279.71 L376.6 279.76 L377.0 279.67 L377.4 279.7 L377.8 279.45 L378.2 279.95 L378.6 281.25 L379.0 282.85 L379.4 284.67 L379.8 284.07 L380.5 279 L381.5 277.5 L382.5 278 L383.5 275.8 L384.5 276.5 L385.5 278 L386.5 281 L387.5 279 L388.5 283 L389 280 L389.6 262 L390 284 L390.5 282.24 L390.9 281.28 L391.3 280.95 L391.7 280.69 L392.1 280.68 L392.5 280.77 L392.9 280.63 L393.3 281.18 L393.7 282.39 L394.1 284.4 L394.5 286.9 L394.9 285.75 L395.3 283.51 L395.7 281.97 L396.1 281.14 L396.5 280.58 L396.9 280.53 L397.3 280.27 L397.7 280.73 L398.1 280.84 L398.5 282.05 L398.9 283.38 L399.3 285.31 L399.7 286.76 L400.1 284.37 L400.5 282.71 L400.9 281.52 L401.3 280.58 L401.7 280.32 L402.1 280.51 L402.5 280.56 L402.9 280.66 L403.3 281.15 L403.7 282.47 L404.1 283.93 L404.5 286.45 L404.9 285.76 L405.3 283.81 L405.7 282.09 L406.1 281.26 L406.5 280.61 L406.9 280.37 L407.3 280.37 L407.7 280.81 L408.1 281.02 L408.5 281.63 L408.9 282.89 L409.3 285.17 L409.7 287.31 L410.1 284.67 L410.5 282.67 L410.9 281.6 L411.3 281.03 L411.7 280.41 L412.1 280.27 L412.5 280.43 L412.9 280.64 L413.3 281.3 L413.7 282.13 L414.1 284.12 L414.5 286.4 L414.9 286.03 L415.3 283.62 L415.7 282.38 L416.1 281.04 L416.5 280.81 L416.9 280.38 L417.3 280.36 L417.7 280.69 L418.1 280.76 L418.5 281.84 L418.9 282.96 L419.3 284.78 L419.7 287.36 L420.1 284.9 L420.5 283.04 L420.9 281.84 L421.3 280.69 L421.7 280.51 L422.1 280.36 L422.5 280.75 L422.9 280.47 L423.3 280.91 L423.7 281.92 L424.6 275 L425 262.3 L425.6 263.5 L426 303 L426.5 281 L427 280.45 L427.4 280.7 L427.8 280.73 L428.2 280.81 L428.6 281.3 L429.0 281.88 L429.4 282.47 L429.8 283.16 L430.2 282.48 L430.6 281.57 L431.0 280.68 L431.4 280.71 L431.8 280.46 L432.2 280.44 L433 276.5 L433.5 279.5 L436 280 L436.5 280.92 L436.9 280.65 L437.3 280.55 L437.7 280.72 L438.1 280.98 L438.5 281.89 L438.9 282.6 L439.3 284.74 L439.7 286.64 L440.1 285.29 L440.5 283.56 L440.9 282.2 L441.3 281.21 L441.7 280.66 L442.1 280.79 L442.5 280.74 L442.9 281.11 L443.3 281.11 L443.7 282.03 L444.1 283.69 L444.5 285.24 L444.9 286.62 L445.3 284.56 L445.7 282.85 L446.1 281.39 L446.5 280.8 L446.9 280.61 L447.3 281.01 L447.7 280.7 L448.1 281.14 L448.5 281.77 L448.9 282.57 L449.3 284.2 L449.7 286.77 L450.1 285.64 L450.5 283.45 L450.9 282.26 L451.3 281.21 L451.7 280.79 L452.1 280.56 L452.5 280.93 L452.9 281.09 L453.3 281.28 L453.7 282.21 L454.1 283.08 L454.5 285.11 L454.9 286.9 L455.3 284.84 L455.7 283.09 L456.1 281.64 L456.5 280.95 L456.9 280.8 L457.3 280.8 L457.7 281.03 L458.1 280.83 L458.5 281.65 L458.9 282.63 L459.3 284.28 L459.7 286.43 L460.1 285.87 L460.5 283.66 L460.9 282.18 L461.3 281.29 L461.7 281.07 L462.1 280.6 L462.5 280.65 L462.9 280.99 L463.3 281.04 L463.7 281.67 L464.1 282.93 L464.5 285.06 L464.9 287.08 L465.3 285.06 L465.7 283.2 L466.1 282.03 L466.5 281.0 L466.9 280.64 L467.3 280.6 L467.7 280.81 L468.1 281.06 L468.5 281.4 L468.9 282.25 L469.3 283.89 L469.7 286.11 L470.1 286.14 L470.5 284.05 L470.9 282.56 L471.3 281.51 L471.7 280.77 L472.1 280.98 L472.5 280.7 L472.9 280.88 L473.3 281.05 L473.7 281.91 L474.1 282.86 L474.5 284.69 L474.9 287.04 L475.3 284.86 L475.7 283.35 L476.1 281.93 L476.5 281.08 L476.9 280.81 L477.3 281.05 L477.7 280.81 L478.1 280.8 L478.5 281.51 L478.9 282.34 L479.3 283.99 L479.7 285.62 L480.1 286.28 L480.5 284.28 L480.9 282.68 L481.3 281.71 L481.7 280.76 L482.1 280.71 L482.5 280.61 L482.9 280.68 L483.3 281.31 L483.7 281.74 L484.1 283.07 L484.5 284.55 L484.9 287.1 L485.3 285.22 L485.7 283.2 L486.6 276 L487.5 279 L490 280.5 L490.5 284.38 L490.9 282.93 L491.3 281.52 L491.7 281.25 L492.1 281.08 L492.5 280.86 L492.9 280.96 L493.3 281.04 L493.7 281.6 L494.1 282.65 L494.5 284.38 L494.9 286.49 L495.3 285.16 L495.7 283.24 L496.1 282.11 L496.5 281.52 L496.9 280.93 L497.3 280.91 L497.7 280.85 L498.1 281.23 L498.5 281.43 L498.9 281.93 L499.3 283.2 L499.7 285.16 L500.1 286.55 L500.5 284.49 L500.9 282.63 L501.3 281.62 L501.7 281.33 L502.1 280.98 L502.5 280.89 L502.9 280.92 L503.3 281.41 L503.7 281.59 L504.1 282.68 L504.5 284.08 L504.9 286.14 L505.3 285.7 L505.7 283.89 L506.1 282.23 L506.5 281.34 L506.9 281.22 L507.3 280.86 L507.7 280.75 L508.1 281.26 L508.5 281.32 L508.9 282.21 L509.3 283.21 L509.7 285.2 L510.1 286.74 L510.5 284.44 L510.9 282.73 L511.3 281.9 L511.7 281.34 L512.1 281.24 L512.5 280.79 L512.9 281.07 L513.3 281.09 L513.7 281.61 L514.1 282.35 L514.5 283.87 L514.9 285.97 L515.3 285.95 L515.7 283.61 L516.1 282.4 L516.5 281.7 L516.9 281.36 L517.3 280.86 L517.7 280.81 L518.1 281.27 L518.5 281.55 L518.9 281.95 L519.3 282.88 L519.7 285.02 L520.1 286.94 L520.5 285.01 L520.9 283.17 L521.3 282.12 L521.7 281.14 L522.1 281.19 L522.5 280.86 L522.9 280.96 L523.4 275.7 L524.3 278 L526 277.5 L528 280 L530 279 L532 283.5 L534 281 L536 279 L538 281.5 L540 280 L541.5 279 L542.6 274 L543.3 268 L544 274.5 L545.5 277 L547 279 L549 279.5 L551 282 L552 283.5 L553 284.65 L553.9 284.56 L554.8 281.01 L555.7 281.2 L556.6 282.2 L557.5 282.85 L558.4 282.11 L559.3 280.68 L560.2 281.36 L561.1 283.99 L562.0 284.94 L562.9 280.23 L563.8 283.09 L564.7 284.17 L565.6 280.21 L566.5 284.61 L567.4 280.65 L568.6 277.5 L570 279 L572 280.5 L574 279 L576 281.5 L577 283.3 L577.9 283.03 L578.8 283.45 L579.7 281.68 L580.6 282.31 L581.5 283.2 L582.4 282.34 L583.3 283.62 L584.2 282.46 L585.1 282.41 L586.0 280.13 L586.9 283.4 L587.8 282.69 L588.7 281.29 L589.6 284.2 L590.5 284.29 L591.4 282.52 L592.3 280.99 L593.2 282.6 L595 281.5 L596.5 279.5 L598 280.5 L599 274 L599.5 268 L600.3 271 L601 269.5 L602 274 L603.5 277 L605 281.5 L606.5 279.5 L608 281 L610 283.5 L611 281.48 L612.0 282.94 L613.0 281.49 L614.0 279.68 L615.0 279.87 L616.0 283.0 L617.0 279.74 L618.0 281.2 L619.0 280.11 L620.0 283.98 L621.0 283.17 L622.0 283.92 L623.0 283.8 L624.0 280.24 L625.0 285.19 L626.0 281.08 L627.0 280.21 L628.0 280.74 L629.0 280.15 L631 282 L632 279 L633 275.5 L633.6 277.5 L634.5 272 L635.3 262 L636 250 L636.6 247 L637.2 255 L637.6 249 L638.4 258 L639.5 265 L641 273 L642.5 276 L644 275.5 L645 277.5 L646 271.5 L646.5 277 L648 278 L649.5 277 L650.5 271.5 L651 268.5 L651.8 273.5 L653 273 L654.5 274.5 L656 275 L656.6 281 L657.4 283.5 L658 280.5 L660 281.5 L661.5 284 L662.5 280.5 L664 279.5 L666 280.5 L668 278.5 L670 278 L672 276.5 L674 275.5 L676 274.5 L678 275.5 L680 275 L682 278.5 L683.5 279.5 L684.5 276 L685.5 272 L686.5 270.5 L687.5 275.5 L688.5 273 L690 272.5 L691.5 276 L692.5 272.5 L694 273 L695.5 272 L696.3 275.5 L697.3 274" fill="none" stroke="#2a2af2" stroke-width="0.9" stroke-linejoin="round"/>
<path d="M118.8 187 L119.2 153.5 L120.2 152.5 L120.5 156.15 L121.0 156.32 L121.5 155.8 L122.0 154.57 L122.5 153.08 L123 167 L123.4 153 L123.6 152.02 L124.1 152.3 L124.6 153.13 L125.1 155.01 L125.6 156.17 L126.1 156.73 L126.6 155.56 L127.1 154.5 L127.6 152.79 L128.1 152.4 L128.6 152.38 L129.1 152.39 L129.6 153.5 L130.1 154.72 L130.6 156.07 L131.1 156.72 L131.6 155.57 L132.1 154.68 L132.6 153.14 L133.1 152.33 L133.6 152.48 L134.1 152.31 L134.6 153.53 L135.1 154.67 L135.6 155.9 L136.1 156.66 L136.6 155.82 L137.1 154.25 L137.6 153.25 L138.1 152.14 L138.6 152.49 L139.1 152.29 L139.6 153.27 L140.1 154.86 L140.6 155.99 L141.1 156.6 L141.6 155.78 L142.1 154.21 L142.6 152.86 L143.1 152.21 L143.6 152.37 L144.1 152.38 L144.6 153.15 L145.1 154.74 L145.6 155.67 L146.1 156.34 L146.6 156.03 L147.1 154.28 L147.6 152.89 L148.1 152.35 L148.6 152.06 L149.1 152.32 L149.6 152.94 L150.1 154.5 L150.6 155.9 L151.1 156.32 L151.6 156.06 L152.1 154.61 L152.6 153.01 L153.1 152.72 L153.6 152.15 L154.1 152.19 L154.6 152.82 L155.1 154.47 L155.6 156.03 L156.1 156.66 L156.6 155.96 L157.1 154.55 L157.6 152.99 L158.1 152.56 L158.6 152.34 L159.1 152.29 L159.6 153.11 L160.1 154.29 L160.6 156.02 L161.1 156.63 L161.6 155.91 L162.1 154.99 L162.6 153.05 L163.1 152.51 L163.6 152.24 L164.1 152.22 L164.6 152.71 L165.1 154.43 L165.6 155.41 L166.1 156.51 L166.6 156.37 L167.1 154.59 L167.6 153.2 L168.3 165.7 L168.7 153 L169 152.39 L169.5 152.77 L170.0 154.0 L170.5 155.58 L171.0 156.2 L171.5 156.18 L172.0 155.04 L172.5 153.42 L173.0 152.88 L173.5 152.48 L174.0 152.45 L174.5 152.44 L175.0 154.06 L175.7 153.5 L187 153.6 L187.2 163.5 L187.6 154.5 L188 153.07 L188.5 152.31 L189.0 152.46 L189.5 152.77 L190.0 154.12 L190.5 156.16 L191.0 157.85 L191.5 157.87 L192.0 156.62 L192.5 154.75 L193.0 153.08 L193.5 152.55 L194.0 152.44 L194.5 152.62 L195.0 154.24 L195.5 156.27 L196.0 158.14 L197 151.35 L197.84 151.89 L198.28 164.86 L198.71 152.81 L198.72 151.98 L198.82 151.72 L199.9 152.27 L200.47 161.63 L201.04 153.91 L201.75 162.46 L202.33 153.52 L202.48 151.81 L203.84 152.41 L204.35 151.58 L204.72 158.82 L205.08 151.43 L205.57 159.96 L205.98 151.18 L206.63 168.54 L207.19 153.32 L206.67 152.43 L208.86 152.0 L209.42 151.95 L210.07 169.16 L210.72 153.51 L211.26 164.52 L211.65 150.59 L212.3 162.01 L212.86 153.12 L213.09 151.72 L213.88 151.17 L216.61 151.55 L216.91 157.07 L217.21 151.73 L218.8 151.1 L218.9 150.87 L219.82 151.4 L220.37 161.6 L220.93 149.94 L221.65 159.23 L222.26 150.96 L222.49 151.15 L223.92 151.42 L224.98 150.5 L225.58 163.91 L226.18 153.03 L226.83 165.93 L227.35 152.45 L227.04 150.68 L228.94 151.53 L229.97 150.63 L230.49 160.78 L231.01 150.24 L231.73 157.25 L232.34 152.12 L232.4 151.28 L233.96 151.66 L234.56 150.57 L234.99 157.11 L235.41 150.91 L235.99 159.83 L236.46 152.9 L237.1 159.6 L237.63 152.48 L237.29 151.42 L238.98 151.82 L239.51 151.47 L240.0 158.14 L240.5 152.75 L241.12 157.89 L241.62 153.11 L241.71 151.11 L244.0 150.7 L244.9 150.43 L245.43 158.6 L245.95 150.36 L246.74 157.82 L247.4 152.17 L247.94 169.18 L248.34 151.07 L249.01 161.27 L249.6 151.23 L248.62 150.64 L249.02 151.12 L251.01 151.26 L251.31 157.59 L251.61 151.87 L253.94 151.56 L254.04 151.34 L254.7 150.92 L255.2 162.11 L255.69 151.87 L256.24 159.34 L256.67 152.35 L256.87 151.52 L259.06 151.76 L260.11 151.37 L260.5 160.9 L260.89 151.76 L261.54 161.39 L262.1 151.22 L262.78 159.92 L263.33 151.73 L263.47 151.7 L264.08 152.11 L264.93 152.01 L265.47 158.14 L266.0 151.54 L266.64 163.28 L267.16 151.35 L267.86 161.01 L268.45 152.66 L268.51 152.26 L269.1 152.39 L269.71 152.7 L269.9 152.48 L270 152.51 L271.18 152.48 L271.68 159.97 L272.17 153.28 L272.72 162.43 L273.16 152.82 L273.79 166.54 L274.32 152.95 L273.83 153.15 L274.12 153.74 L274.45 153.39 L274.88 164.02 L275.31 155.36 L276.03 164.69 L276.64 155.04 L277.31 162.57 L277.85 153.04 L278.02 153.66 L279.14 153.75 L279.61 153.71 L280.19 160.83 L280.78 153.77 L281.42 163.05 L281.93 154.44 L282.52 165.64 L283.0 156.21 L282.29 154.25 L284.16 153.78 L285.27 154.34 L285.63 161.16 L285.99 156.16 L286.47 162.87 L286.86 153.69 L287.41 166.56 L287.88 153.86 L288.4 166.82 L288.81 156.38 L288.85 154.15 L289.18 155.64 L290.27 154.74 L290.87 165.8 L291.46 155.67 L292.04 166.17 L292.48 155.22 L292.96 173.27 L293.34 156.12 L293.94 173.38 L294.45 156.48 L293.87 155.57 L294.2 155.55 L294.87 155.59 L295.53 165.06 L296.19 154.52 L296.71 166.75 L297.08 156.46 L297.62 168.87 L298.09 157.77 L297.97 155.29 L299.22 156.25 L299.45 155.73 L299.96 165.38 L300.47 156.64 L301.08 164.51 L301.58 156.49 L302.14 168.84 L302.6 157.95 L303.14 166.81 L303.59 157.08 L302.9 156.5 L304.24 156.91 L304.77 157.01 L305.14 169.24 L305.52 158.3 L305.97 167.75 L306.35 157.08 L307.08 172.47 L307.73 158.19 L307.33 157.17 L309.26 158.41 L310.07 158.32 L310.5 169.75 L310.93 159.34 L311.41 170.45 L311.8 157.93 L312.54 178.38 L313.19 159.58 L312.4 158.05 L312.7 168 L313.2 190 L313.8 205 L314.0 205 L314.25 326 L314.5 206 L314.75 300 L315.0 210 L315.25 326 L315.5 207 L315.75 318 L316.0 208 L316.25 326 L316.5 206 L316.75 352 L317.0 203 L317.25 352 L317.6 201 L317.85 290 L318.3 218 L318.55 334 L319.2 226 L319.45 318 L320.1 223 L320.35 330 L320.9 224 L321.15 296 L321.5 214 L321.75 318 L322.0 200 L322.25 319 L322.5 203 L322.75 300 L323.0 209 L323.25 336 L323.5 214 L323.75 322 L324.0 218 L324.25 330 L324.6 221 L324.85 352 L325.0 224 L325.25 352 L325.5 227 L325.75 352 L326.0 231 L326.25 352 L326.5 234 L326.75 352 L327.0 345 L327.3 153.4 L327.6 180 L328.0 195.27 L328.45 194.52 L328.9 189.8 L329.35 183.42 L329.8 184.34 L330.25 186.86 L330.7 184.69 L331.15 187.04 L331.6 191.48 L332.05 197.61 L332.4 200 L332.6 352 L332.8 352 L333.0 190 L334.0 175.72 L334.25 185.54 L334.5 171.66 L334.75 177.95 L335.0 170.74 L335.25 177.6 L335.65 168.67 L335.9 174.07 L336.3 162.56 L336.55 171.1 L336.85 163.17 L337.1 173.8 L337.4 163.02 L337.65 168.4 L337.95 162.45 L338.2 167.12 L338.5 165.08 L338.75 169.7 L339.0 164.61 L339.25 169.62 L339.5 165.52 L339.75 176.47 L340.0 167.32 L340.25 180.06 L340.5 168.52 L340.75 180.62 L341.0 170.02 L341.25 175.14 L341.5 175.04 L341.75 179.6 L342.0 177.77 L342.25 181.83 L342.5 177.7 L342.75 189.19 L343.0 182.35 L343.25 191.84 L343.5 184.42 L343.75 187.67 L344.0 186.01 L344.25 194.67 L344.5 184.01 L344.75 195.13 L345.0 181.85 L345.25 194.05 L345.5 182.37 L345.75 185.09 L346.0 181.56 L346.25 192.21 L346.5 186.77 L346.75 189.64 L347.0 186.74 L347.25 196.84 L347.5 190.16 L347.75 201.89 L348.3 216 L348.6 152.5 L349 153.29 L348.92 153.61 L349.22 157.95 L349.52 153.38 L349.32 153.68 L349.42 152.95 L350.25 153.21 L350.79 157.98 L351.33 152.8 L352.03 158.5 L352.61 154.52 L352.9 152.8 L353.3 170 L353.6 153 L354 153.13 L355.03 153.03 L354.34 153.6 L354.44 153.45 L355.24 152.68 L355.73 159.33 L356.23 153.82 L356.71 158.24 L357.08 154.61 L357.71 158.19 L358.25 152.82 L358.94 158.02 L359.52 154.87 L359.08 152.89 L359.46 152.81 L360.46 152.88 L361.03 156.9 L361.6 152.85 L362.33 155.95 L362.92 153.9 L362.76 152.42 L364.48 152.07 L365.45 152.26 L365.96 156.09 L366.47 152.67 L367.0 155.21 L367.42 153.03 L368.0 156.21 L368.49 152.44 L367.82 151.53 L369.5 151.53 L370.07 151.54 L370.54 155.71 L371.01 151.86 L371.79 156.9 L372.46 152.97 L372.17 151.29 L374.52 151.94 L375.5 151.61 L375.94 156.8 L376.38 150.42 L376.86 154.68 L377.25 150.46 L377.84 156.54 L378.34 153.33 L378.3 151.8 L379.54 151.86 L380.14 150.91 L380.8 155.83 L381.46 152.34 L382.02 155.31 L382.43 153.29 L382.26 151.79 L384.56 151.33 L385.12 152.12 L385.42 156.57 L385.72 152.07 L386.4 151.14 L386.8 200 L387.2 266 L387.5 200 L388 179 L388.6 186 L389.2 181 L389.8 196 L390.3 190 L390.8 206 L391.3 300 L391.7 344 L392.1 250 L392.4 158.5 L392.8 156.76 L393.65 156.57 L394.22 161.81 L394.79 155.75 L394.5 157.19 L394.6 154.98 L395.27 155.09 L395.57 159.43 L395.87 155.13 L396.9 154.91 L397 150.76 L397.21 150.31 L397.87 154.72 L398.52 152.64 L399.17 154.48 L399.67 150.17 L399.52 151.39 L399.62 151.86 L400.27 151.31 L400.7 154.97 L401.13 150.52 L401.63 156.2 L402.04 153.13 L402.54 155.78 L402.95 151.21 L402.88 151.78 L404.64 151.45 L406.48 152.03 L406.78 154.65 L407.08 152.09 L409.56 151.06 L409.66 151.65 L410.07 151.37 L410.74 155.96 L411.42 153.86 L412.02 155.16 L412.47 153.53 L411.9 151.32 L412.5 170 L412.8 153 L413 152.49 L414.18 151.79 L414.8 155.19 L415.42 152.67 L414.58 151.77 L414.68 151.73 L415.1 151.51 L415.52 157.22 L415.94 151.14 L416.55 156.91 L417.07 151.77 L416.9 151.7 L417.3 153 L417.5 226 L417.7 153 L418 151.95 L419.01 151.53 L419.6 156.47 L420.19 151.22 L419.6 152.46 L419.7 151.53 L420.76 152.31 L421.21 157.63 L421.65 151.41 L421.9 152.25 L422.2 153 L422.4 336 L422.6 200 L422.8 336 L423.0 154 L423.2 152.36 L423.72 152.33 L424.02 156.11 L424.32 152.69 L424.62 152.49 L424.72 151.62 L425.74 151.85 L426.12 155.74 L426.5 153.39 L426.5 152.15 L426.8 155 L427.0 344 L427.2 153 L428.2 150.81 L428.93 151.65 L429.32 154.84 L429.72 150.89 L429.64 151.51 L429.74 151.13 L430.07 150.81 L430.37 155.6 L430.67 151.26 L431.3 150.97 L431.8 186 L432.2 153 L432.6 151.07 L433.57 150.62 L433.87 154.32 L434.17 150.98 L434.66 150.73 L434.76 150.37 L436.24 150.77 L436.54 158.47 L436.84 150.42 L439.68 150.52 L439.78 151.09 L442.87 150.96 L443.17 156.17 L443.47 151.32 L444.7 150.82 L444.8 150.24 L445.78 150.1 L446.39 159.41 L447.0 152.22 L447.52 158.81 L447.89 150.95 L448.42 159.2 L448.85 150.65 L448.38 150.53 L449.82 150.31 L450.09 149.53 L450.69 159.17 L451.3 152.11 L452.07 158.45 L452.71 151.94 L452.9 149.74 L454.84 150.55 L455.72 150.82 L456.24 156.14 L456.77 150.7 L456.9 150.86 L457 150.89 L457.85 151.15 L458.35 158.41 L458.86 151.31 L459.38 163.79 L459.78 150.54 L459.76 150.61 L459.86 150.58 L461.71 151.47 L462.01 159.29 L462.31 151.26 L463.9 151.09 L464 150.31 L464.66 149.96 L464.78 149.91 L464.88 150.29 L465.59 149.41 L466.03 160.53 L466.46 150.78 L467.23 157.33 L467.9 149.95 L468.43 156.63 L468.81 151.79 L468.3 150.04 L469.9 149.81 L470.54 149.67 L470.95 159.85 L471.36 150.08 L472.0 159.5 L472.56 151.72 L473.27 158.62 L473.86 151.38 L474.02 150.36 L474.92 149.83 L475.83 150.44 L476.37 163.98 L476.92 150.59 L477.53 158.92 L478.02 151.51 L478.61 159.12 L479.09 150.45 L479.65 159.76 L480.1 150.25 L479.71 150.16 L479.94 150.2 L480.93 149.93 L481.33 157.44 L481.74 150.84 L482.48 156.24 L483.13 150.04 L483.93 160.4 L484.6 149.65 L484.66 150.03 L484.96 150.52 L487.3 151.17 L487.6 161.23 L487.9 151.39 L489.88 150.96 L489.98 151.36 L490.7 151.1 L491.36 158.97 L492.01 152.44 L492.64 157.57 L493.12 151.56 L493.86 160.21 L494.5 153.36 L494.07 151.36 L495.0 151.42 L496.2 151.57 L496.86 158.7 L497.53 152.83 L498.32 157.55 L498.96 152.4 L498.81 151.61 L500.02 151.86 L500.64 151.89 L501.06 158.67 L501.48 152.89 L502.24 159.59 L502.91 152.91 L502.84 151.52 L505.04 151.45 L505.55 151.52 L506.12 160.75 L506.69 151.38 L507.26 160.57 L507.7 152.82 L508.34 163.03 L508.88 152.07 L508.93 151.47 L510.06 151.14 L510.37 151.3 L510.98 160.42 L511.59 150.47 L512.19 165.27 L512.65 152.56 L512.44 151.22 L515.08 151.09 L515.38 150.63 L515.76 158.7 L516.13 152.66 L516.72 161.88 L517.21 151.79 L517.98 156.8 L518.63 152.54 L519.39 161.55 L520.01 150.78 L519.23 151.01 L520 151.74 L521.15 151.91 L520.0 151.47 L520.1 151.33 L520.78 150.99 L521.45 157.16 L522.12 151.31 L522.79 156.82 L523.32 151.62 L523.84 156.59 L524.24 153.03 L523.77 151.34 L525.12 151.18 L526.8 151.26 L527.1 158.48 L527.4 151.5 L530.04 151.07 L530.14 151.46 L533.02 151.62 L533.32 157.35 L533.62 152.18 L535.06 151.94 L535.16 151.39 L537.12 151.81 L537.42 155.37 L537.72 151.8 L540.08 151.19 L540.18 150.42 L540.51 150.94 L540.95 157.09 L541.39 151.4 L541.88 159.46 L542.28 151.1 L542.97 156.63 L543.58 150.69 L543.34 150.71 L545.2 150.8 L546.58 150.89 L546.88 159.2 L547.18 151.01 L550.12 151.05 L550.22 150.2 L550.78 149.68 L551.18 156.16 L551.58 151.49 L552.32 157.0 L552.96 151.68 L553.24 150.68 L555.24 150.85 L556.51 151.45 L556.81 158.15 L557.11 151.19 L560.16 150.98 L560.26 150.98 L560.71 151.08 L561.36 156.37 L562.0 152.28 L562.52 156.02 L562.89 150.45 L563.46 157.25 L563.94 150.05 L563.79 150.84 L565.28 151.78 L567.63 151.9 L567.93 155.95 L568.23 151.67 L570.2 151.64 L570.3 151.56 L573.07 151.34 L573.37 154.39 L573.67 151.79 L575.22 151.36 L575.32 150.28 L578.12 150.65 L578.42 159.33 L578.72 151.08 L580.24 150.25 L580.34 151.12 L583.21 150.97 L583.51 154.33 L583.81 151.51 L585.26 150.83 L585.36 151.48 L586.3 151.1 L586.79 159.33 L587.29 151.79 L588.0 156.65 L588.6 150.29 L589.17 159.84 L589.62 151.9 L589.35 151.72 L590.38 151.4 L590.83 151.24 L591.23 157.7 L591.64 152.61 L592.16 157.36 L592.6 151.99 L592.49 151.39 L595.4 152.12 L598.38 152.27 L598.68 158.76 L598.98 152.42 L600.32 152.59 L600.42 152.32 L600.79 151.98 L601.19 160.83 L601.58 151.95 L602.05 157.89 L602.43 151.92 L603.01 160.22 L603.51 151.38 L603.55 151.95 L605.44 152.03 L606.79 152.19 L607.09 161.53 L607.39 152.78 L610.36 151.95 L610.46 152.47 L611.22 152.2 L611.59 159.73 L611.95 154.22 L612.68 160.13 L613.34 153.37 L612.98 152.13 L615.48 151.85 L616.72 152.8 L617.02 157.02 L617.32 152.28 L617.9 152.4 L618 152.34 L618.37 152.1 L618.99 159.12 L619.61 151.84 L620.22 161.32 L620.7 153.47 L620.4 151.65 L620.5 151.57 L621.33 151.65 L621.85 160.33 L622.36 150.67 L622.86 160.86 L623.25 152.37 L624.0 160.03 L624.67 150.46 L625.0 150.81 L625.52 151.62 L626.44 151.51 L626.89 159.84 L627.34 152.2 L627.91 159.81 L628.37 151.49 L628.31 151.35 L630.54 151.68 L630.9 151.62 L631.29 158.91 L631.68 151.58 L632.41 163.57 L633.06 153.31 L633.76 163.51 L634.31 153.14 L633.41 151.2 L635.56 152.44 L636.06 151.76 L636.53 159.78 L636.99 153.62 L636.9 151.42 L637.5 182 L637.9 155 L638.3 151.71 L638.95 151.2 L639.47 162.17 L640.0 152.16 L640.54 159.91 L640.95 153.2 L640.48 151.5 L640.58 151.04 L641.03 150.51 L641.46 162.66 L641.9 151.64 L642.54 170.11 L643.08 150.07 L643.7 159.06 L644.2 152.57 L643.95 150.96 L645.6 151.53 L645.91 150.63 L646.33 161.75 L646.74 153.18 L647.24 164.62 L647.64 152.59 L648.21 168.2 L648.68 150.16 L649.25 160.41 L649.7 152.37 L650.36 165.47 L650.91 152.9 L650.52 151.27 L650.62 151.74 L650.99 152.01 L651.39 165.59 L651.79 151.89 L652.46 166.5 L653.05 150.83 L653.71 160.14 L654.24 153.26 L654.94 174.3 L655.51 151.51 L655.54 151.49 L655.64 151.34 L656.42 151.15 L656.96 160.71 L657.49 151.55 L656.9 151.91 L657 152.94 L658.59 153.0 L658.89 158.04 L659.19 153.21 L660.56 152.16 L660.66 152.38 L663.62 152.87 L663.92 155.35 L664.22 152.38 L665.58 152.67 L665.68 152.83 L666.36 152.16 L666.74 157.48 L667.12 152.34 L667.75 158.35 L668.3 151.42 L668.56 152.05 L670.7 152.14 L671.48 151.5 L671.84 156.42 L672.21 152.56 L672.7 155.53 L673.1 153.24 L673.71 156.24 L674.23 151.93 L674.19 152.26 L675.72 152.39 L676.91 152.45 L677.47 157.83 L678.03 153.16 L678.77 156.3 L679.38 153.92 L678.84 152.67 L680.74 152.59 L681.7 152.54 L682.19 157.39 L682.68 151.58 L683.46 156.68 L684.13 152.92 L683.7 152.35 L684 152 L684.6 230 L685 318.6 L685.3 240 L686 200 L687 182 L688 168 L688.5 158 L689 164 L689.4 157 L689.9 167 L690.4 160 L690.9 172 L691.4 161 L691.9 157 L692.4 166 L692.9 156 L693.4 163 L693.9 159 L694.4 169 L694.9 174 L695.3 160 L695.8 155 L696.3 165 L696.8 150 L697.1 166 L697.4 158" fill="none" stroke="#4a3ac8" stroke-width="0.8" stroke-linejoin="round"/>
<path d="M118.8 352.8 L119.0 144 L119.5 144 L119.8 327.6 L120.8 329.8 L121.6 334.8 L122.5 340.8 L123.5 344.8 L124.6 347.3 L126 349.3 L128 351.1 L130 351.6 L131 351.69 L132.0 351.43 L133.0 352.18 L134.0 351.31 L135.0 352.0 L136.0 351.75 L137.0 351.29 L138.0 351.96000000000004 L139.0 351.26 L140.0 351.85 L141.0 351.3 L142.0 351.34000000000003 L143.0 351.84000000000003 L144.0 352.44 L145.0 351.39 L146.0 351.53000000000003 L147.0 352.14 L148.0 352.62 L149.0 352.07 L150.0 351.8 L151.0 352.66 L152.0 351.27000000000004 L153.0 352.49 L154.0 351.63 L155.0 351.42 L156.0 351.38 L157.0 351.66 L158.0 352.42 L159.0 351.47 L160.0 352.07 L161.0 352.16 L162.0 351.76 L163.0 352.02000000000004 L164.0 351.29 L165.0 351.29 L166.0 351.51 L167.0 352.22 L168.0 351.84000000000003 L169.0 351.67 L170.0 352.08 L171.0 351.88 L172.0 351.65000000000003 L173.0 352.39 L174.0 352.25 L174.5 350.3 L175.0 351.57 L176.0 352.06 L177.0 351.99 L178.0 352.51 L179.0 352.29 L180.0 351.63 L181.0 352.67 L182.0 351.38 L183.0 351.83 L184.0 352.34000000000003 L185.0 351.43 L186.0 351.93 L187.0 351.26 L188.0 352.2 L189.0 352.35 L190.0 352.06 L191.0 352.51 L192.0 351.67 L193.0 352.24 L194.0 352.09000000000003 L195.0 352.07 L196.0 351.88 L197.0 352.46000000000004 L198.0 352.62 L199.0 351.91 L200.0 352.2 L201.0 351.29 L202.0 352.25 L203.0 352.17 L204.0 352.69 L205.0 352.43 L206.0 351.63 L207.0 351.78000000000003 L208.0 352.2 L209.0 351.23 L210.0 351.89 L211.0 351.45 L212.0 351.38 L213.0 351.29 L214.0 352.35 L215.0 351.39 L216.0 351.57 L217.0 351.79 L218.0 352.51 L219.0 351.32 L220.0 351.87 L222 352.6 L318 352.6 L319 351.3 L320 352.6 L322 352.3 L322 352.6 L322.7 347.8 L323.2 351.8 L323.8 344.8 L324.4 349.8 L325 340.8 L325.4 346.8 L325.9 332.8 L326.4 338.8 L326.8 352.6 L327.5 352.6 L383 352.6 L383.5 351.8 L384 352.6 L385 351.8 L385.6 352.6 L423.5 352.6 L424.3 350.3 L425 348.8 L425.8 350.8 L426.5 352.6 L522.5 352.6 L523 351.8 L523.5 352.6 L541.5 352.6 L542.5 351.6 L543.3 350.8 L544 351.6 L545 352.6 L597 352.6 L598.5 351.40000000000003 L600 350.8 L601.5 351.0 L603 352.1 L604 352.6 L625 352.6 L632 352.40000000000003 L634 351.8 L635.3 346.8 L636 341.8 L636.5 344.8 L637 340.8 L637.8 345.8 L638.6 348.8 L640 351.1 L642 351.8 L644 352.40000000000003 L646 351.8 L648 352.6 L650 351.8 L651 351.1 L652 351.8 L655 352.40000000000003 L672 352.6 L674 351.8 L676 351.6 L678 352.1 L680 351.6 L682 352.2 L684 351.6 L686 352.1 L688 351.40000000000003 L690 352.0 L692 351.6 L694 352.0 L696 351.6 L697.3 352.1" fill="none" stroke="#f2404e" stroke-width="1" stroke-linejoin="round"/>
<path d="M322.2 352.8 L322.6 346 L323.4 347.5 L324.2 339 L325 340.5 L325.6 333 L326.2 334 L326.3 352.8 Z" fill="#e01c2c"/>
<line x1="118.9" y1="141.8" x2="118.9" y2="357.6" stroke="#ee4450" stroke-width="0.9" stroke-dasharray="1.6 1.2"/>
</svg>
<svg class="abs" style="left:700px;top:360px" width="60" height="100" viewBox="700 360 60 100">
<defs><filter id="sh" x="-50%" y="-20%" width="220%" height="150%"><feGaussianBlur stdDeviation="1.300"/></filter></defs>
<g transform="translate(2.200,2.600)" opacity="0.450" filter="url(#sh)"><path d="M728.500 372 L735.600 386.200 L730.900 386.200 L728.300 439 A2.800 2.800 0 0 1 722.700 438.700 L725.300 386.200 L720.300 386.200 Z" fill="#555"/></g>
<path d="M728.500 372 L735.600 386.200 L730.900 386.200 L728.300 439 A2.800 2.800 0 0 1 722.700 438.700 L725.300 386.200 L720.300 386.200 Z" fill="#f8414c"/>
</svg>
<div class="abs" style="left:888px;top:0;width:1px;height:546px;background:rgba(255,255,255,.5)"></div>
</body></html>
